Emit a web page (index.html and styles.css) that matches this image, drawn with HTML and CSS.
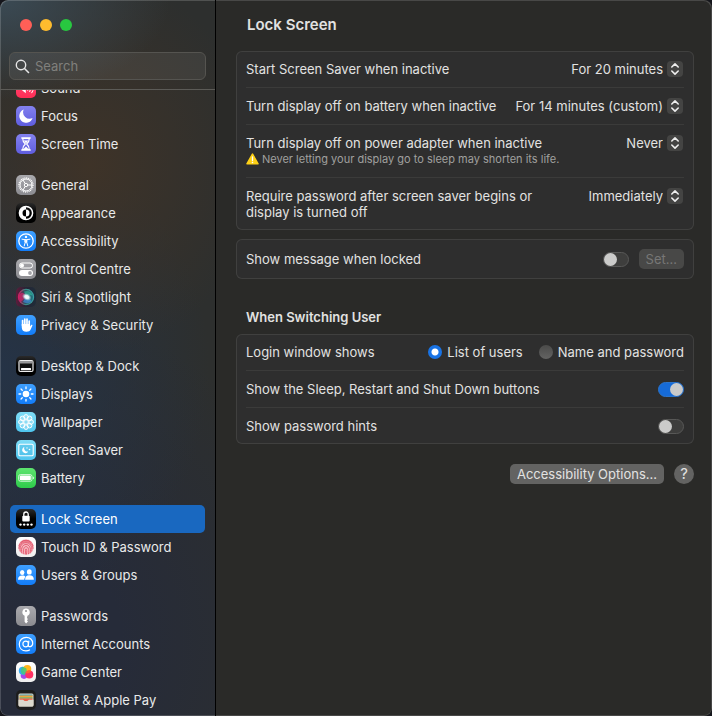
FILE: index.html
```html
<!DOCTYPE html>
<html lang="en-GB">
<head>
<meta charset="utf-8">
<meta name="viewport" content="width=device-width, initial-scale=1">
<title>Lock Screen</title>
<link rel="stylesheet" href="styles.css">
</head>
<body>
<svg class="defs" aria-hidden="true">
  <defs>
    <symbol id="chevrons" viewBox="0 0 16 16"><path d="M4.800 6 8 2.900l3.200 3.100M4.800 10 8 13.100l3.200-3.100" fill="none" stroke="#eee" stroke-width="1.600" stroke-linecap="round" stroke-linejoin="round"/></symbol>
    <radialGradient id="siri-glow"><stop offset="0" stop-color="#fff"/><stop offset=".45" stop-color="#e4f3f6"/><stop offset="1" stop-color="#8fc6d4" stop-opacity="0"/></radialGradient>
    <linearGradient id="siri-orb" x1="0" y1="0" x2="1" y2="0"><stop offset="0" stop-color="#a3194f"/><stop offset=".4" stop-color="#2f4a5c"/><stop offset="1" stop-color="#1f7a80"/></linearGradient>
    <linearGradient id="siri-ring" x1="0" y1="0" x2="1" y2="0"><stop offset="0" stop-color="#d01c62"/><stop offset=".45" stop-color="#3b8c86"/><stop offset="1" stop-color="#3a9fa5"/></linearGradient>
  </defs>
</svg>
<div class="window">
  <aside class="sidebar">
    <div class="toolbar">
      <div class="lights">
        <button class="light red" aria-label="Close"></button>
        <button class="light yellow" aria-label="Minimise"></button>
        <button class="light green" aria-label="Zoom"></button>
      </div>
      <label class="search">
        <svg width="15" height="15" viewBox="0 0 15 15" aria-hidden="true"><circle cx="6" cy="6" r="4.7" fill="none" stroke="#e6e6e6" stroke-width="1.4"/><path d="m9.5 9.5 4 4" stroke="#e6e6e6" stroke-width="1.6" stroke-linecap="round"/></svg>
        <input type="search" placeholder="Search" aria-label="Search">
      </label>
    </div>
    <nav class="nav">
      <div class="group">
        <a href="#"><svg class="icon pink" viewBox="0 0 20 20"><path d="M3.5 8h2.3l4-3.3v10.6l-4-3.3H3.5z" fill="#fff"/><path d="M11.8 7.7q1.5 2.3 0 4.6M13.8 6.4q2.4 3.6 0 7.2M15.8 5.2q3.2 4.8 0 9.6" fill="none" stroke="#fff" stroke-linecap="round"/></svg>Sound</a>
        <a href="#"><svg class="icon indigo" viewBox="0 0 20 20"><path d="M7.7 3.6A6.8 6.8 0 1 0 16.6 12 6.5 6.5 0 0 1 7.7 3.6Z" fill="#fff"/></svg>Focus</a>
        <a href="#"><svg class="icon indigo" viewBox="0 0 20 20"><path d="M5.3 3.2h9.4v1.5H5.3zM5.3 15.3h9.4v1.5H5.3z" fill="#fff"/><path d="M6.7 4.5c0 3 .8 3.9 2.6 5.5-1.8 1.6-2.6 2.500-2.600 5.500h6.600c0-3-.8-3.900-2.600-5.500 1.800-1.600 2.600-2.500 2.600-5.500z" fill="none" stroke="#fff" stroke-width="1.200"/><path d="M7.800 6.600h4.400L10 9.500zM7.600 15l2.400-2.600 2.400 2.600z" fill="#fff"/></svg>Screen Time</a>
      </div>
      <div class="group">
        <a href="#"><svg class="icon gray" viewBox="0 0 20 20"><g fill="none" stroke="#fff"><circle cx="10" cy="10" r="7" stroke-width="1.3" stroke-dasharray="1 .83"/><circle cx="10" cy="10" r="6"/><circle cx="10" cy="10" r="1.7"/><path d="M11.7 10H16M9.1 8.5 7 4.9M9.1 11.5 7 15.1"/></g></svg>General</a>
        <a href="#"><svg class="icon black" viewBox="0 0 20 20"><circle cx="10" cy="10" r="6.600" fill="none" stroke="#fff" stroke-width="1.500"/><path d="M10 3.500a6.500 6.500 0 0 0 0 13v-3a3.500 3.500 0 0 1 0-7z" fill="#fff"/><path d="M10 6.500a3.500 3.500 0 0 1 0 7z" fill="#fff"/></svg>Appearance</a>
        <a href="#"><svg class="icon blue" viewBox="0 0 20 20"><circle cx="10" cy="10" r="7.200" fill="none" stroke="#fff" stroke-width="1.300"/><circle cx="10" cy="5.900" r="1.200" fill="#fff"/><path d="M6 8.200 9.300 8.700v2.500L8.200 15M14 8.200 10.700 8.700v2.500L11.800 15M9.300 8.700h1.400v2.500H9.300z" fill="none" stroke="#fff" stroke-width="1" stroke-linecap="round" stroke-linejoin="round"/></svg>Accessibility</a>
        <a href="#"><svg class="icon gray" viewBox="0 0 20 20"><rect x="3.500" y="4" width="13" height="5" rx="2.500" fill="none" stroke="#fff"/><circle cx="6" cy="6.500" r="2" fill="#fff"/><rect x="3" y="11" width="14" height="6" rx="3" fill="#fff"/><circle cx="14" cy="14" r="1.900" fill="#a3a3a8"/></svg>Control Centre</a>
        <a href="#"><svg class="icon siri" viewBox="0 0 20 20"><circle cx="10" cy="10" r="7.600" fill="url(#siri-orb)" stroke="url(#siri-ring)" stroke-width="1.200"/><path d="M3.200 8c2.500-3.500 6-2 7.500 2-2 1.500-4 3.500-6 5-1.500-2-2-4.500-1.500-7z" fill="#e0266f" opacity=".6"/><path d="M8 4.500c4-1.500 7.500 0 8.500 4-2.500-.8-4.500-.2-6.500 1.500z" fill="#35cfa5" opacity=".5"/><path d="M9 11c3 0 5.500 1 6.500 3-2.500 3-6 2.500-8.500 1z" fill="#4592ec" opacity=".6"/><ellipse cx="10.800" cy="10" rx="5" ry="3.600" fill="url(#siri-glow)" transform="rotate(25 10.800 10)"/></svg>Siri &amp; Spotlight</a>
        <a href="#"><svg class="icon blue" viewBox="0 0 20 20"><path d="M6.600 10.500V5.600M8.800 9.500V4M11 9.500V4.200M13.200 10.500V6" stroke="#fff" stroke-width="1.700" stroke-linecap="round"/><path d="M5.750 9h8.300v2.600l1-1.500c.5-.8 1.700-.5 1.300.6l-1.600 3.600c-.8 1.800-2.200 2.500-4.200 2.500-3 0-4.800-1.700-4.800-4.600z" fill="#fff"/></svg>Privacy &amp; Security</a>
      </div>
      <div class="group">
        <a href="#"><svg class="icon black" viewBox="0 0 20 20"><rect x="3" y="4.500" width="14" height="11" rx="1.500" fill="#111" stroke="#eee" stroke-width="1.200"/><path d="M3.600 5.100h12.800v2.400H3.600z" fill="#98989a"/><rect x="5" y="12" width="10" height="2.200" rx=".5" fill="#fff"/></svg>Desktop &amp; Dock</a>
        <a href="#"><svg class="icon blue" viewBox="0 0 20 20"><circle cx="10" cy="10" r="3.300" fill="#fff"/><path d="M10 3v1.700M10 15.300V17M3 10h1.700M15.300 10H17M5.050 5.050l1.200 1.200M13.750 13.750l1.200 1.200M5.050 14.950l1.200-1.200M13.750 6.250l1.200-1.200" stroke="#fff" stroke-width="1.300" stroke-linecap="round"/></svg>Displays</a>
        <a href="#"><svg class="icon cyan" viewBox="0 0 20 20"><g fill="#fff" fill-opacity=".25" stroke="#fff" stroke-width="1"><circle cx="10" cy="4.900" r="2.300"/><circle cx="13.600" cy="6.400" r="2.300"/><circle cx="15.100" cy="10" r="2.300"/><circle cx="13.600" cy="13.600" r="2.300"/><circle cx="10" cy="15.100" r="2.300"/><circle cx="6.400" cy="13.600" r="2.300"/><circle cx="4.900" cy="10" r="2.300"/><circle cx="6.400" cy="6.400" r="2.300"/><circle cx="10" cy="10" r="2.300"/></g></svg>Wallpaper</a>
        <a href="#"><svg class="icon cyan" viewBox="0 0 20 20"><rect x="2.800" y="4.200" width="14.400" height="11.600" rx="1.300" fill="#3fb2e2" fill-opacity=".3" stroke="#fff" stroke-width="1.100"/><path d="M8.300 7a3.200 3.200 0 1 0 3.900 4.500A3.400 3.400 0 0 1 8.300 7z" fill="#fff"/><circle cx="11" cy="7.900" r=".7" fill="#fff"/><circle cx="13.500" cy="9.500" r=".8" fill="#fff"/></svg>Screen Saver</a>
        <a href="#"><svg class="icon lime" viewBox="0 0 20 20"><rect x="2.600" y="6.500" width="13.400" height="6.800" rx="2" fill="none" stroke="#fff" stroke-opacity=".7"/><rect x="3.800" y="7.600" width="11" height="4.600" rx="1" fill="#fff"/><path d="M17.200 8.700q1.300 1.200 0 2.400z" fill="#fff" stroke="#fff" stroke-width=".4"/></svg>Battery</a>
      </div>
      <div class="group">
        <a href="#" class="selected" aria-current="page"><svg class="icon black" viewBox="0 0 20 20"><rect x="6.300" y="6.800" width="7.400" height="5.600" rx="1" fill="#fff"/><path d="M7.800 7V5.200a2.200 2.200 0 0 1 4.400 0V7" fill="none" stroke="#fff" stroke-width="1.300"/><g fill="#fff"><circle cx="4.500" cy="15.600" r="1.200"/><circle cx="8.200" cy="15.600" r="1.200"/><circle cx="11.800" cy="15.600" r="1.200"/><circle cx="15.500" cy="15.600" r="1.200"/></g></svg>Lock Screen</a>
        <a href="#"><svg class="icon white" viewBox="0 0 20 20"><circle cx="10" cy="10" r="7.800" fill="#f6b9c1"/><g fill="none" stroke="#e2576c" stroke-width=".9" stroke-linecap="round"><path d="M4.800 5.300a7.200 7.200 0 0 1 10.400 0M3 8.500a7.500 7.500 0 0 1 14 0M3 11.500c0-9 14-9 14 0M4.200 14.200c-2.200-11.500 13.700-11.500 11.500 0M5.800 16c-2.700-11.500 11.200-11.500 8.400 0M7.800 16.800c-2.600-9.600 7-9.800 4.700 0M9.800 17.200c-1.800-7.400 2.300-7 .7-.2"/></g></svg>Touch ID &amp; Password</a>
        <a href="#"><svg class="icon blue" viewBox="0 0 20 20"><g fill="#fff"><ellipse cx="6.200" cy="7.400" rx="2.200" ry="2.500"/><path d="M2 14.800c0-3 1.700-4.200 4.200-4.200 1.700 0 2.700.5 3.300 1.400-.9.800-1.200 1.700-1.200 2.800z"/><ellipse cx="13.300" cy="6.900" rx="2.400" ry="2.700"/><path d="M9.100 14.800c0-3.200 1.600-4.500 4.300-4.500s4.500 1.300 4.500 4.500z"/></g></svg>Users &amp; Groups</a>
      </div>
      <div class="group">
        <a href="#"><svg class="icon gray" viewBox="0 0 20 20"><path d="M10 2.600a3.700 3.700 0 0 0-1.400 7.100v6.100l1.500 1.600 1.900-1.900-1.100-1.200 1.100-1.200-1.100-1.200.6-2.200A3.700 3.700 0 0 0 10 2.600z" fill="#fff"/><circle cx="10" cy="5" r="1.100" fill="#99999d"/></svg>Passwords</a>
        <a href="#"><svg class="icon blue" viewBox="0 0 20 20"><g fill="none" stroke="#fff" stroke-width="1.200" stroke-linecap="round"><circle cx="9.700" cy="10" r="2.800"/><path d="M12.800 7.200 12.300 11c-.3 2.600 4.400 2.200 4.400-1.700C16.700 5.700 13.900 3.300 10.300 3.300 6.300 3.300 3.300 6.300 3.300 10.200c0 4 2.800 6.600 6.700 6.600 1.400 0 2.700-.3 3.600-.8"/></g></svg>Internet Accounts</a>
        <a href="#"><svg class="icon white" viewBox="0 0 20 20"><circle cx="8" cy="13.600" r="3.300" fill="#a447ed"/><circle cx="6.800" cy="8.800" r="4" fill="#37abf2"/><circle cx="11.300" cy="7" r="4" fill="#ffb51d"/><path d="M10.200 6.300c1.200 2.300.3 5.100-1.800 6.500-4-.4-5-5.200-1.600-8z" fill="#45c97b" opacity=".85"/><circle cx="13.300" cy="12.400" r="4" fill="#ff3065"/><path d="M9.600 10.900a4 4 0 0 1 5.500-2.100 4 4 0 0 1-5.500 2.100z" fill="#ff682e"/></svg>Game Center</a>
        <a href="#"><svg class="icon wallet" viewBox="0 0 20 20"><rect x="2.500" y="3.500" width="15" height="13" rx="1.500" fill="#d9d5c9"/><path d="M3.500 4.500h13v1.500h-13z" fill="#4f9fae"/><path d="M3.500 5.500h13v2h-13z" fill="#f0a53a"/><path d="M3.500 7.300h13v1.500h-13z" fill="#7bb05b"/><path d="M3.500 8.500h13v2.500h-13z" fill="#ea5f48"/><path d="M2.500 9.700h4.400c1 0 .9 1.500 3.100 1.500s2.100-1.500 3.100-1.500h4.400V15c0 .9-.6 1.500-1.500 1.500H4c-.9 0-1.500-.6-1.500-1.500z" fill="#dcd9cd"/></svg>Wallet &amp; Apple Pay</a>
      </div>
    </nav>
  </aside>
  <main class="content">
    <h1>Lock Screen</h1>
    <section class="card">
      <div class="row">
        <label for="saver">Start Screen Saver when inactive</label>
        <span class="popup"><select id="saver"><option>For 20 minutes</option></select><svg class="chevrons" aria-hidden="true"><use href="#chevrons"/></svg></span>
      </div>
      <div class="row">
        <label for="battery">Turn display off on battery when inactive</label>
        <span class="popup"><select id="battery"><option>For 14 minutes (custom)</option></select><svg class="chevrons" aria-hidden="true"><use href="#chevrons"/></svg></span>
      </div>
      <div class="row">
        <div>
          <label for="adapter">Turn display off on power adapter when inactive</label>
          <p class="note"><svg width="13" height="12" viewBox="0 0 13 12" aria-hidden="true"><path d="M6.500 1.200 12 10.800H1z" fill="#fdd017" stroke="#fdd017" stroke-width="1.600" stroke-linejoin="round"/><path d="M6.500 4v3.600" stroke="#fff" stroke-width="1.300" stroke-linecap="round"/><circle cx="6.500" cy="9.500" r=".8" fill="#fff"/></svg>Never letting your display go to sleep may shorten its life.</p>
        </div>
        <span class="popup"><select id="adapter"><option>Never</option></select><svg class="chevrons" aria-hidden="true"><use href="#chevrons"/></svg></span>
      </div>
      <div class="row">
        <label for="require" class="wrap">Require password after screen saver begins or display is turned off</label>
        <span class="popup"><select id="require"><option>Immediately</option></select><svg class="chevrons" aria-hidden="true"><use href="#chevrons"/></svg></span>
      </div>
    </section>
    <section class="card">
      <div class="row middle">
        <label for="message">Show message when locked</label>
        <span class="controls"><input type="checkbox" class="switch" id="message"><button class="button" disabled>Set…</button></span>
      </div>
    </section>
    <h2>When Switching User</h2>
    <section class="card">
      <div class="row middle" role="radiogroup" aria-labelledby="login">
        <span id="login">Login window shows</span>
        <span class="radios">
          <label><input type="radio" name="login" checked>List of users</label>
          <label><input type="radio" name="login">Name and password</label>
        </span>
      </div>
      <div class="row middle">
        <label for="buttons">Show the Sleep, Restart and Shut Down buttons</label>
        <input type="checkbox" class="switch" id="buttons" checked>
      </div>
      <div class="row middle">
        <label for="hints">Show password hints</label>
        <input type="checkbox" class="switch" id="hints">
      </div>
    </section>
    <footer class="actions">
      <button class="button">Accessibility Options…</button>
      <button class="button help" aria-label="Help">?</button>
    </footer>
  </main>
</div>
</body>
</html>
```

FILE: styles.css
```css
* { box-sizing: border-box; }

body {
  margin: 0;
  background: #15161c;
  color: #e2e2e1;
  font: 13px/16px Inter, "Liberation Sans", sans-serif;
}

button, input, select { font: inherit; color: inherit; }
h1, h2, p { margin: 0; }
.defs { position: absolute; width: 0; height: 0; }

.window {
  display: grid;
  grid-template-columns: 216px 1fr;
  height: 100vh;
  overflow: hidden;
  background: #2a2a28;
  border-radius: 8px;
}

.sidebar {
  display: flex;
  flex-direction: column;
  min-height: 0;
  border-right: 1px solid #000;
  border-radius: 8px 0 0 8px;
  box-shadow: inset 1px 1px #ffffff2b, inset 0 -1px #ffffff2b;
  background:
    radial-gradient(ellipse 170px 100px at 0 0, #3b4a54, #3b4a5400),
    radial-gradient(ellipse 170px 190px at 90px 165px, #3e3328, #3e332800),
    radial-gradient(ellipse 210px 240px at 0 370px, #253346, #25334600),
    radial-gradient(ellipse 300px 330px at 30px 640px, #262b39 30%, #262b3900),
    #2d2f2e;
}

.toolbar {
  flex: none;
  padding: 19px 9px 9px;
  border-bottom: 1px solid #5c5b57;
}

.lights { display: flex; gap: 8px; padding-left: 11px; }
.light { width: 12px; height: 12px; padding: 0; border: 0; border-radius: 50%; }
.red { background: #ff5f57; }
.yellow { background: #febc2e; }
.green { background: #28c840; }

.search {
  display: flex;
  align-items: center;
  gap: 5px;
  height: 28px;
  margin-top: 21px;
  padding: 0 5px;
  border: 1px solid #555450;
  border-radius: 6px;
  background: #ffffff12;
}
.search input { flex: 1; min-width: 0; padding: 0; border: 0; outline: 0; background: none; }
.search input::placeholder { color: #80807d; opacity: 1; }

/* The list rests at the end of its scroll range. */
.nav {
  flex: 1;
  display: flex;
  flex-direction: column;
  justify-content: flex-end;
  gap: 13px;
  min-height: 0;
  padding: 0 10px 2px;
  overflow: hidden;
}
.group { display: flex; flex-direction: column; flex: none; }
.group a {
  display: flex;
  align-items: center;
  gap: 5px;
  height: 28px;
  padding: 0 6px;
  border-radius: 5px;
  color: #e9eaea;
  text-decoration: none;
  white-space: nowrap;
}
.group .selected { background: #1968c0; color: #fff; }

.icon { flex: none; width: 20px; height: 20px; border-radius: 5px; }
.pink { background: linear-gradient(#ff4b77, #ff2d55); }
.indigo { background: linear-gradient(#8381ee, #5f5ddf); }
.gray { background: linear-gradient(#a9a9ad, #8b8b90); }
.black { background: linear-gradient(#2a2a2a, #000 50%); }
.blue { background: linear-gradient(#3fa0ff, #127cf8); }
.cyan { background: linear-gradient(#7fdcf6, #4fc5ee); }
.lime { background: linear-gradient(#5ee46f, #2ecb4b); }
.white { background: linear-gradient(#fff, #eee); }
.siri { background: linear-gradient(90deg, #5c1c3b, #252535 50%, #1f2c39); }
.wallet { background: #1d1d1d; }

.content {
  min-width: 0;
  padding: 0 18px 20px 20px;
  border-radius: 0 8px 8px 0;
  box-shadow: inset -1px 1px #484847, inset 0 -1px #484847;
}

h1 { padding: 15px 11px 16px; font-size: 15px; line-height: 20px; font-weight: 600; }
h2 { padding: 30px 10px 9px; font-size: 13px; line-height: 16px; font-weight: 600; }

.card {
  padding: 0 10px;
  border-radius: 6px;
  background: #2e2e2e;
  box-shadow: inset 0 0 0 1px #40403f;
}
.card + .card { margin-top: 9px; }

.row {
  display: flex;
  justify-content: space-between;
  gap: 16px;
  padding: 10px 0;
}
.row + .row { border-top: 1px solid #3b3b3a; }
.middle { align-items: center; }
.wrap { max-width: 290px; }

.note { display: flex; align-items: center; gap: 3px; color: #a0a09f; font-size: 11px; }

.popup { display: grid; flex: none; height: 16px; padding-right: 1px; }
.popup > * { grid-area: 1 / 1; }
.popup select {
  appearance: none;
  padding: 0 20px 0 0;
  border: 0;
  background: none;
  line-height: 16px;
  text-align-last: right;
}
.chevrons {
  justify-self: end;
  width: 16px;
  height: 16px;
  border-radius: 4px;
  background: #444443;
  pointer-events: none;
}

.controls { display: flex; align-items: center; gap: 10px; }

.switch {
  appearance: none;
  flex: none;
  display: flex;
  width: 26px;
  height: 15px;
  margin: 0;
  border: 1px solid #585857;
  border-radius: 8px;
  background: #3e3e3d;
}
.switch::before { content: ""; width: 13px; height: 13px; border-radius: 50%; background: #cbcbca; }
.switch:checked { justify-content: flex-end; border-color: #2b74cb; background: #166bd8; }

.radios { display: flex; gap: 16px; }
.radios label { display: flex; align-items: center; gap: 5px; }
.radios input {
  appearance: none;
  width: 14px;
  height: 14px;
  margin: 0;
  border-radius: 50%;
  background: linear-gradient(#4b4b4a, #636362);
}
.radios input:checked { background: radial-gradient(circle, #fff 3px, #1873e5 4px); }

.button {
  height: 20px;
  padding: 0 7px;
  border: 0;
  border-radius: 5px;
  background: #636362;
  line-height: 20px;
}
.button:disabled { background: #484847; color: #777776; }

.actions { display: flex; justify-content: flex-end; gap: 10px; padding-top: 20px; }
.help { width: 20px; padding: 0; border-radius: 50%; font-size: 15px; }
```
